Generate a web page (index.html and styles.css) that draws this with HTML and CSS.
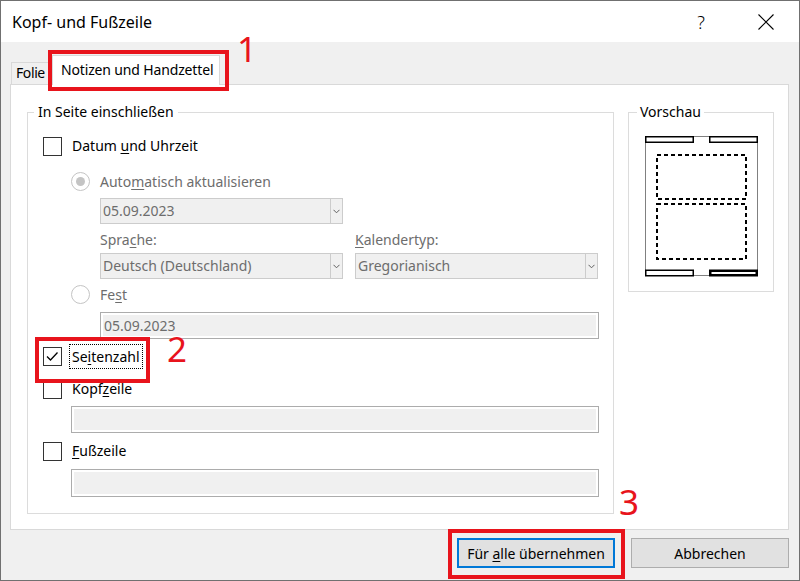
FILE: index.html
```html
<!DOCTYPE html>
<html lang="de">
<head>
    <meta charset="UTF-8">
    <title>Kopf- und Fußzeile</title>
    <link rel="stylesheet" href="styles.css">
</head>
<body>
<div id="dialog">
    <div class="title-bar">
        <span class="title-text">Kopf- und Fußzeile</span>
        <span class="title-help">?</span>
        <span class="title-close">
            <svg width="16" height="16" viewBox="0 0 16 16"><path d="M0.5 0.5L15.5 15.5M15.5 0.5L0.5 15.5" stroke="#000" stroke-width="1.1" fill="none"/></svg>
        </span>
    </div>
    <div class="dialog-body">
        <ul id="tab_top">
            <li class="tab-item">Folie</li>
            <li class="tab-item selected">Notizen und Handzettel</li>
        </ul>
        <div id="tab_panel">
            <fieldset class="group group-include">
                <legend>In Seite einschließen</legend>
                <div class="group-body">
                    <div class="check-row row-date">
                        <span class="check-box"></span>
                        <span class="check-label">Datum <u>u</u>nd Uhrzeit</span>
                    </div>
                    <div class="radio-row row-auto">
                        <span class="radio on"></span>
                        <span class="radio-label">Auto<u>m</u>atisch aktualisieren</span>
                    </div>
                    <div class="combo combo-date">
                        <span class="combo-value">05.09.2023</span>
                        <span class="combo-arrow"><svg width="7" height="5" viewBox="0 0 7 5"><path d="M0.5 0.8L3.5 3.8L6.5 0.8" stroke="#606060" fill="none"/></svg></span>
                    </div>
                    <div class="combo-grid">
                        <span class="field-label">Spra<u>c</u>he:</span>
                        <span class="field-label"><u>K</u>alendertyp:</span>
                        <div class="combo">
                            <span class="combo-value">Deutsch (Deutschland)</span>
                            <span class="combo-arrow"><svg width="7" height="5" viewBox="0 0 7 5"><path d="M0.5 0.8L3.5 3.8L6.5 0.8" stroke="#606060" fill="none"/></svg></span>
                        </div>
                        <div class="combo">
                            <span class="combo-value">Gregorianisch</span>
                            <span class="combo-arrow"><svg width="7" height="5" viewBox="0 0 7 5"><path d="M0.5 0.8L3.5 3.8L6.5 0.8" stroke="#606060" fill="none"/></svg></span>
                        </div>
                    </div>
                    <div class="radio-row row-fest">
                        <span class="radio"></span>
                        <span class="radio-label">Fe<u>s</u>t</span>
                    </div>
                    <div class="text-field field-fest">05.09.2023</div>
                    <div class="check-row row-page">
                        <span class="check-box checked">
                            <svg width="17" height="17" viewBox="0 0 17 17"><path d="M3 8.5L6.5 12L13.5 4.5" stroke="#000" stroke-width="1.3" fill="none"/></svg>
                        </span>
                        <span class="check-label focused">Se<u>i</u>tenzahl</span>
                    </div>
                    <div class="check-row row-header">
                        <span class="check-box"></span>
                        <span class="check-label">Kopf<u>z</u>eile</span>
                    </div>
                    <div class="text-field field-header"></div>
                    <div class="check-row row-footer">
                        <span class="check-box"></span>
                        <span class="check-label"><u>F</u>ußzeile</span>
                    </div>
                    <div class="text-field field-footer"></div>
                </div>
            </fieldset>
            <fieldset class="group group-preview">
                <legend>Vorschau</legend>
                <svg class="preview" width="113" height="141" viewBox="0 0 113 141">
                    <path d="M0.5 0L0.5 140M112.5 0L112.5 140M48 0.5L64 0.5M48 139.5L64 139.5" stroke="#808080" fill="none"/>
                    <rect x="0.75" y="0.75" width="47.5" height="5.5" fill="#fff" stroke="#000" stroke-width="1.5"/>
                    <rect x="64.75" y="0.75" width="47.5" height="5.5" fill="#fff" stroke="#000" stroke-width="1.5"/>
                    <rect x="12" y="19" width="89" height="44" fill="none" stroke="#000" stroke-width="2" stroke-dasharray="4 3"/>
                    <rect x="12" y="68" width="89" height="55" fill="none" stroke="#000" stroke-width="2" stroke-dasharray="4 3"/>
                    <rect x="0.75" y="134.25" width="47.5" height="5.5" fill="#fff" stroke="#000" stroke-width="1.5"/>
                    <rect x="65.25" y="134.75" width="46.5" height="4.5" fill="#fff" stroke="#000" stroke-width="2.5"/>
                </svg>
            </fieldset>
        </div>
        <div class="button-bar">
            <button class="btn btn-default">Für <u>a</u>lle übernehmen</button>
            <button class="btn">Abbrechen</button>
        </div>
    </div>

    <!-- rote Markierungen -->
    <span class="mark-box mark-box-1"></span>
    <span class="mark-box mark-box-2"></span>
    <span class="mark-box mark-box-3"></span>
    <span class="mark-num mark-num-1">1</span>
    <span class="mark-num mark-num-2">2</span>
    <span class="mark-num mark-num-3">3</span>
</div>
</body>
</html>
```

FILE: styles.css
```css
*{
    margin: 0;
    padding: 0;
    box-sizing: border-box;
}
body{
    font-family: "Noto Sans", "Liberation Sans", sans-serif;
    font-size: 14px;
    color: #000;
}
u{
    text-underline-offset: 2px;
}
#dialog{
    position: relative;
    width: 800px;
    height: 581px;
    border: 1px solid #707070;
    background: #f0f0f0;
    display: flex;
    flex-direction: column;
}
.title-bar{
    height: 41px;
    background: #fff;
    display: flex;
    align-items: center;
    padding: 0 25px 0 11px;
}
.title-text{
    flex: 1;
    font-size: 16px;
}
.title-help{
    width: 20px;
    text-align: center;
    font-size: 18px;
    font-weight: 300;
    margin-right: 47px;
}
.title-close{
    width: 16px;
    height: 16px;
    display: flex;
}
.dialog-body{
    flex: 1;
    padding: 13px 10px 0 9px;
}
#tab_top{
    list-style: none;
    display: flex;
    align-items: flex-end;
    height: 29px;
    margin-left: 1px;
}
#tab_top>.tab-item{
    width: 41px;
    height: 22px;
    line-height: 20px;
    padding: 0 0 0 4px;
    letter-spacing: -0.4px;
    border: 1px solid #d9d9d9;
    border-bottom: none;
    background: #f0f0f0;
    white-space: nowrap;
}
#tab_top>.tab-item.selected{
    position: relative;
    z-index: 1;
    width: auto;
    height: 30px;
    margin-bottom: -1px;
    padding: 0 6px 0 8px;
    letter-spacing: -0.15px;
    line-height: 28px;
    background: #fff;
}
#tab_panel{
    height: 446px;
    background: #fff;
    border: 1px solid #d9d9d9;
    padding: 17px 14px 15px 16px;
    display: flex;
    align-items: flex-start;
    gap: 14px;
}
.group{
    border: 1px solid #dcdcdc;
    padding: 0;
}
.group>legend{
    line-height: 20px;
    margin-left: 6px;
    padding: 0 4px;
}
.group-include{
    width: 587px;
    height: 412px;
}
.group-preview{
    width: 146px;
    height: 190px;
}
.group-preview>legend{
    margin-left: 8px;
    padding: 0 3px;
}
.preview{
    display: block;
    margin: 14px 0 0 16px;
}
.group-body{
    padding: 12px 14px 0 15px;
}
.check-row, .radio-row{
    display: flex;
    align-items: center;
    height: 24px;
}
.check-box{
    width: 19px;
    height: 19px;
    border: 1px solid #333;
    background: #fff;
    margin-right: 7px;
    display: flex;
}
.check-label{
    border: 1px solid transparent;
    padding: 0 2px;
    line-height: 22px;
}
.check-label.focused{
    border: 1px dotted #000;
    line-height: 23px;
}
.radio-row{
    padding-left: 28px;
    color: #6d6d6d;
}
.radio{
    width: 19px;
    height: 19px;
    border: 1px solid #c4c4c4;
    border-radius: 50%;
    margin-right: 10px;
    display: flex;
    align-items: center;
    justify-content: center;
}
.radio.on::after{
    content: "";
    width: 9px;
    height: 9px;
    border-radius: 50%;
    background: #c4c4c4;
}
.row-auto{ margin-top: 11px; }
.row-fest{ margin-top: 3px; }
.row-page{ margin-top: 5px; }
.row-header{ margin-top: 9px; }
.row-footer{ margin-top: 6px; }
.combo{
    display: flex;
    height: 26px;
    border: 1px solid #cccccc;
    background: #f0f0f0;
    color: #6d6d6d;
}
.combo-value{
    flex: 1;
    padding-left: 2px;
    line-height: 24px;
}
.combo-arrow{
    width: 12px;
    border-left: 1px solid #cccccc;
    display: flex;
    align-items: center;
    justify-content: center;
}
.combo-date{
    width: 243px;
    margin: 5px 0 0 57px;
}
.combo-grid{
    display: grid;
    grid-template-columns: 243px 243px;
    grid-template-rows: 20px 26px;
    column-gap: 12px;
    row-gap: 3px;
    margin: 6px 0 0 57px;
}
.field-label{
    color: #6d6d6d;
    line-height: 20px;
}
.text-field{
    height: 27px;
    border: 1px solid #acacac;
    box-shadow: inset 0 0 0 2px #fff;
    background: #f0f0f0;
    color: #6d6d6d;
    padding-left: 3px;
    line-height: 25px;
}
.field-fest{
    margin: 6px 0 0 57px;
}
.field-header{
    margin: 5px 0 0 28px;
}
.field-footer{
    height: 28px;
    margin: 6px 0 0 28px;
}
.button-bar{
    display: flex;
    justify-content: flex-end;
    gap: 16px;
    margin-top: 8px;
}
.btn{
    width: 158px;
    height: 30px;
    background: #e1e1e1;
    border: 1px solid #adadad;
    font-family: inherit;
    font-size: 14px;
    color: #000;
}
.btn-default{
    border: 2px solid #0078d7;
}
.mark-box{
    position: absolute;
    border: 4px solid #e8141c;
}
.mark-box-1{
    left: 47px;
    top: 49px;
    width: 181px;
    height: 41px;
}
.mark-box-2{
    left: 34px;
    top: 336px;
    width: 115px;
    height: 46px;
}
.mark-box-3{
    left: 447px;
    top: 528px;
    width: 177px;
    height: 50px;
}
.mark-num{
    position: absolute;
    color: #e8141c;
    font-size: 35px;
    line-height: 1;
}
.mark-num-1{
    left: 236px;
    top: 30px;
}
.mark-num-2{
    left: 166px;
    top: 330px;
}
.mark-num-3{
    left: 618px;
    top: 483px;
}
```
